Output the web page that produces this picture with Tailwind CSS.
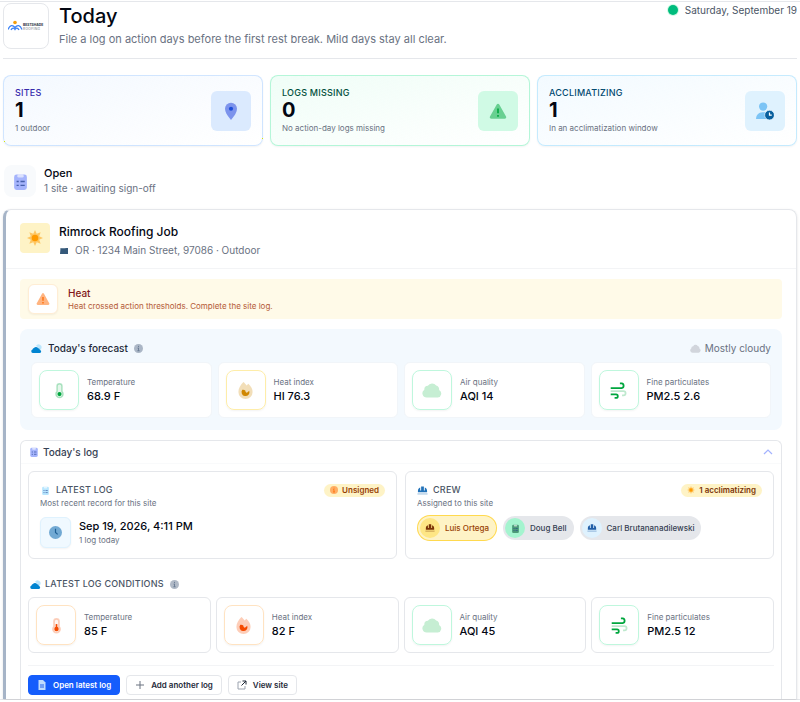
<!DOCTYPE html>
<html lang="en">
<head>
    <meta charset="UTF-8">
    <meta name="viewport" content="width=device-width, initial-scale=1.0">
    <title>Today</title>
    <script src="https://cdn.jsdelivr.net/npm/@tailwindcss/browser@4"></script>
</head>
<body class="bg-white font-['Inter',sans-serif] text-gray-950 overflow-x-hidden">
    <!-- Icon set -->
    <svg class="hidden">
        <symbol id="clipboard" viewBox="0 0 24 24">
            <rect x="3" y="2" width="18" height="22" rx="3.500" fill="currentColor"/>
            <rect x="7.500" y="2" width="9" height="4.500" rx="2" fill="#fff" opacity=".6"/>
            <path d="M6.500 12h3M12 12h6M6.500 17.500h3M12 17.500h6" stroke="#1e3a8a" stroke-opacity=".7" stroke-width="2"/>
        </symbol>
        <symbol id="warn" viewBox="0 0 24 24">
            <path d="M10.300 3.200a2 2 0 0 1 3.400 0l9 16a2 2 0 0 1-1.700 3H3a2 2 0 0 1-1.700-3z" fill="currentColor" opacity=".5"/>
            <path d="M12 8.500v6.500M12 17.300v2.400" stroke="currentColor" stroke-width="2.200"/>
        </symbol>
        <symbol id="sun" viewBox="0 0 24 24">
            <path d="M12 0l2.600 5.700L20.500 3.500l-2.200 5.900L24 12l-5.700 2.600 2.200 5.900-5.900-2.200L12 24l-2.600-5.700-5.900 2.200 2.200-5.900L0 12l5.700-2.600L3.500 3.500l5.900 2.200z" fill="currentColor" opacity=".5"/>
            <circle cx="12" cy="12" r="5" fill="currentColor"/>
        </symbol>
        <symbol id="cloud" viewBox="0 0 24 24">
            <path d="M5.500 21a5 5 0 0 1-2.700-9.200A4.500 4.500 0 0 1 7 7a6 6 0 0 1 10-.5 5 5 0 0 1 3.500 5.500A4.800 4.800 0 0 1 19 21z" fill="currentColor"/>
        </symbol>
        <symbol id="cloud-sun" viewBox="0 0 24 24">
            <path d="M11 6a6.500 6.500 0 0 1 11.500 6c-.3 1.500-1 2.500-1.500 3" fill="#bae6fd"/>
            <path d="M4.500 22a4 4 0 0 1-1.200-7.800A4 4 0 0 1 6.500 11a5.500 5.500 0 0 1 9.500.5 4 4 0 0 1 3.500 3.700 3.500 3.500 0 0 1 0 6.800z" fill="currentColor"/>
        </symbol>
        <symbol id="info" viewBox="0 0 24 24">
            <circle cx="12" cy="12" r="12" fill="currentColor" opacity=".5"/>
            <path d="M12 5v3M12 10v8M9 18h6M9.500 11H12" stroke="currentColor" stroke-width="2.200"/>
        </symbol>
        <symbol id="thermo" viewBox="0 0 24 24">
            <path d="M12 2.500a3.500 3.500 0 0 1 3.500 3.500v7.500a5 5 0 1 1-7 0V6A3.500 3.500 0 0 1 12 2.500z" fill="currentColor" fill-opacity=".1" stroke="currentColor" stroke-opacity=".3" stroke-width="2"/>
            <circle cx="12" cy="17" r="3" fill="currentColor"/>
        </symbol>
        <symbol id="thermo-high" viewBox="0 0 24 24">
            <path d="M12 2.500a3.500 3.500 0 0 1 3.500 3.500v7.500a5 5 0 1 1-7 0V6A3.500 3.500 0 0 1 12 2.500z" fill="currentColor" fill-opacity=".05" stroke="currentColor" stroke-opacity=".25" stroke-width="2.500"/>
            <circle cx="12" cy="17" r="3.200" fill="currentColor"/>
            <path d="M12 10v7" stroke="currentColor" stroke-width="2.400"/>
        </symbol>
        <symbol id="flame" viewBox="0 0 24 24">
            <path d="M9 0c2 1.500 3.300 3 4.500 5L16 2.500c4 3.500 6 7.500 6 11.500a10 10 0 0 1-20 0C2 9 5 4 9 0z" fill="currentColor" opacity=".28"/>
            <path d="M7.500 11a5.600 5.600 0 1 0 9.800 1.500L14 15c-1.500 0-2-1-2.300-3-1.200-1-2.700-1.500-4.200-1z" fill="currentColor"/>
        </symbol>
        <symbol id="wind" viewBox="0 0 24 24" fill="none">
            <path d="M1 8.500h15.500a3.300 3.300 0 0 0 0-6.500H14" stroke="currentColor" stroke-width="2.500"/>
            <path d="M1 13h18a3 3 0 0 1 0 6h-2" stroke="currentColor" stroke-width="2.500" opacity=".25"/>
            <path d="M1 17.500h7.500a2.300 2.300 0 0 1 0 5H6.500" stroke="currentColor" stroke-width="2.500"/>
        </symbol>
        <symbol id="clock" viewBox="0 0 24 24">
            <circle cx="12" cy="12" r="12" fill="currentColor" opacity=".7"/>
            <path d="M12 5v7l4 3.500" fill="none" stroke="#1e5f94" stroke-width="2.200"/>
        </symbol>
        <symbol id="helmet" viewBox="0 0 24 24">
            <path d="M2 16v-3c0-4 2-6.500 5-7.500V12h2V3h6v9h2V5.500c3 1 5 3.500 5 7.500v3z" fill="currentColor"/>
            <path d="M1 19.500h22" stroke="currentColor" stroke-width="2.500" opacity=".4"/>
        </symbol>
    </svg>

    <div class="mt-px border-y border-gray-200 pt-px px-[3px]">
        <!-- Header -->
        <header class="flex items-start gap-2.5 border-b border-gray-200 pb-[9px]">
            <div class="flex size-[46px] shrink-0 items-center justify-center rounded-lg border border-gray-200">
                <svg class="w-9" viewBox="0 0 36 12" role="img" aria-label="Bestshade Roofing">
                    <circle cx="7" cy="2.500" r="1.800" fill="#f59e0b"/>
                    <path d="M0 9.500C2 5 4.500 4.500 7 7.500 9.500 4.500 12 5 14 9.500M3 10C4.500 7 6 8 7 9.500 8 8 9.500 7 11 10" fill="none" stroke="#3b82f6" stroke-width="1.300"/>
                    <text x="15" y="6" font-size="3.300" font-weight="800" fill="#374151">BESTSHADE</text>
                    <text x="15" y="9.500" font-size="3.300" class="tracking-widest" fill="#6b7280">ROOFING</text>
                </svg>
            </div>
            <div class="min-w-0 flex-1">
                <h1 class="text-[20px] leading-[26px] font-medium">Today</h1>
                <p class="mt-0.5 text-[11px] leading-4 text-gray-500">File a log on action days before the first rest break. Mild days stay all clear.</p>
            </div>
            <div class="flex items-center gap-[7px] text-[10px] leading-[14px] text-gray-600">
                <span class="size-2.5 rounded-full bg-emerald-500 ring-1 ring-emerald-100"></span>
                Saturday, September 19
            </div>
        </header>

        <!-- Stats -->
        <section class="mt-4 grid grid-cols-3 gap-[7px]">
            <div class="flex items-center justify-between rounded-lg border border-blue-200/70 bg-linear-to-br from-blue-50/70 to-white px-[11px] py-2.5 shadow-xs">
                <div>
                    <h2 class="text-[9px] leading-[14px] font-medium tracking-wide text-indigo-800">SITES</h2>
                    <p class="text-[20px] leading-[21px] font-bold">1</p>
                    <p class="text-[8px] leading-[14px] text-gray-500">1 outdoor</p>
                </div>
                <div class="flex size-10 items-center justify-center rounded-md bg-blue-100">
                    <svg class="size-[18px]" viewBox="0 0 24 24"><path d="M12 24C7 18 4 13.500 4 9a8 8 0 0 1 16 0c0 4.500-3 9-8 15z" fill="#7c93ec"/><circle cx="12" cy="9" r="2.800" fill="#1d4ed8"/></svg>
                </div>
            </div>
            <div class="flex items-center justify-between rounded-lg border border-emerald-200/80 bg-linear-to-br from-emerald-50/80 to-white px-[11px] py-2.5 shadow-xs">
                <div>
                    <h2 class="text-[9px] leading-[14px] font-medium tracking-wide text-emerald-900">LOGS MISSING</h2>
                    <p class="text-[20px] leading-[21px] font-bold">0</p>
                    <p class="text-[8px] leading-[14px] text-gray-500">No action-day logs missing</p>
                </div>
                <div class="flex size-10 items-center justify-center rounded-md bg-emerald-100">
                    <svg class="size-[18px] text-green-600"><use href="#warn"/></svg>
                </div>
            </div>
            <div class="flex items-center justify-between rounded-lg border border-sky-200/80 bg-linear-to-br from-sky-50/80 to-white px-[11px] py-2.5 shadow-xs">
                <div>
                    <h2 class="text-[9px] leading-[14px] font-medium tracking-wide text-sky-900">ACCLIMATIZING</h2>
                    <p class="text-[20px] leading-[21px] font-bold">1</p>
                    <p class="text-[8px] leading-[14px] text-gray-500">In an acclimatization window</p>
                </div>
                <div class="flex size-10 items-center justify-center rounded-md bg-sky-100">
                    <svg class="size-[18px]" viewBox="0 0 24 24"><circle cx="9.500" cy="6" r="5.500" fill="#7cc4f5"/><path d="M0 22.500c0-5 3.500-9 8.500-9h3c2 0 3 .5 4 1.500v7.500z" fill="#7cc4f5"/><circle cx="18" cy="17.500" r="6.500" fill="#075f9e" stroke="#e0f2fe"/><path d="M18 14v3.500h3" fill="none" stroke="#fff" stroke-width="1.600"/></svg>
                </div>
            </div>
        </section>

        <!-- Open sites -->
        <div class="mt-[19px] flex items-center gap-2 pl-px">
            <div class="flex size-8 items-center justify-center rounded-lg bg-slate-50">
                <svg class="size-[17px] text-[#a5b4fc]"><use href="#clipboard"/></svg>
            </div>
            <div>
                <h2 class="text-[11px] leading-[15px] font-medium">Open</h2>
                <p class="text-[10px] leading-[15px] text-gray-500">1 site · awaiting sign-off</p>
            </div>
        </div>

        <article class="mt-3 rounded-t-lg border border-b-0 border-l-3 border-gray-200 border-l-slate-400/80 shadow-sm">
            <div class="flex items-start gap-[9px] border-b border-gray-100 px-3.5 pt-[13px] pb-2.5">
                <div class="flex size-[30px] items-center justify-center rounded-sm bg-amber-100">
                    <svg class="size-4 text-amber-500"><use href="#sun"/></svg>
                </div>
                <div>
                    <h3 class="text-[12px] leading-[18px] font-medium">Rimrock Roofing Job</h3>
                    <p class="mt-0.5 flex items-center gap-1.5 text-[10px] leading-[15px] text-gray-500">
                        <svg class="h-2 w-2.5" viewBox="0 0 10 8"><path d="M1.500 1C4 2 6 .5 9 1v6H1z" fill="#35597a"/></svg>
                        OR · 1234 Main Street, 97086 · Outdoor
                    </p>
                </div>
            </div>

            <div class="space-y-2.5 px-3.5 pt-2.5">
                <div class="flex items-center gap-2.5 rounded-sm bg-[#fffae8] px-2 py-[5px]">
                    <div class="flex size-[30px] items-center justify-center rounded-md border border-orange-100 bg-white shadow-xs">
                        <svg class="size-3.5 text-orange-500"><use href="#warn"/></svg>
                    </div>
                    <div>
                        <h4 class="text-[10px] leading-[13px] font-medium text-red-900">Heat</h4>
                        <p class="text-[8px] leading-[12px] text-orange-800/80">Heat crossed action thresholds. Complete the site log.</p>
                    </div>
                </div>

                <!-- Forecast -->
                <section class="rounded-lg bg-[#f3f9fe] px-[11px] pt-[11px] pb-3">
                    <div class="flex items-center justify-between text-[10px] leading-4">
                        <h4 class="flex items-center gap-1.5 font-medium text-gray-800">
                            <svg class="size-[11px] text-sky-600"><use href="#cloud-sun"/></svg>
                            Today's forecast
                            <svg class="size-[9px] text-slate-500"><use href="#info"/></svg>
                        </h4>
                        <p class="flex items-center gap-1 text-gray-500">
                            <svg class="size-[11px] text-gray-300"><use href="#cloud"/></svg>
                            Mostly cloudy
                        </p>
                    </div>
                    <dl class="mt-1.5 grid grid-cols-4 gap-1.5">
                        <div class="flex items-center gap-2 rounded-md border border-slate-100 bg-white px-[7px] py-[7px]">
                            <div class="flex size-10 items-center justify-center rounded-lg border border-emerald-200/70 shadow-xs">
                                <svg class="size-[17px] text-green-600"><use href="#thermo"/></svg>
                            </div>
                            <div>
                                <dt class="text-[8px] leading-[13px] text-gray-500">Temperature</dt>
                                <dd class="text-[11px] leading-[15px] font-medium">68.9 F</dd>
                            </div>
                        </div>
                        <div class="flex items-center gap-2 rounded-md border border-slate-100 bg-white px-[7px] py-[7px]">
                            <div class="flex size-10 items-center justify-center rounded-lg border border-amber-200/70 shadow-xs">
                                <svg class="size-[17px] text-yellow-600"><use href="#flame"/></svg>
                            </div>
                            <div>
                                <dt class="text-[8px] leading-[13px] text-gray-500">Heat index</dt>
                                <dd class="text-[11px] leading-[15px] font-medium">HI 76.3</dd>
                            </div>
                        </div>
                        <div class="flex items-center gap-2 rounded-md border border-slate-100 bg-white px-[7px] py-[7px]">
                            <div class="flex size-10 items-center justify-center rounded-lg border border-emerald-200/70 shadow-xs">
                                <svg class="size-5 text-[#c6eed3]"><use href="#cloud"/></svg>
                            </div>
                            <div>
                                <dt class="text-[8px] leading-[13px] text-gray-500">Air quality</dt>
                                <dd class="text-[11px] leading-[15px] font-medium">AQI 14</dd>
                            </div>
                        </div>
                        <div class="flex items-center gap-2 rounded-md border border-slate-100 bg-white px-[7px] py-[7px]">
                            <div class="flex size-10 items-center justify-center rounded-lg border border-emerald-200/70 shadow-xs">
                                <svg class="size-[17px] text-green-600"><use href="#wind"/></svg>
                            </div>
                            <div>
                                <dt class="text-[8px] leading-[13px] text-gray-500">Fine particulates</dt>
                                <dd class="text-[11px] leading-[15px] font-medium">PM2.5 2.6</dd>
                            </div>
                        </div>
                    </dl>
                </section>

                <!-- Log -->
                <section class="rounded-t-md border border-b-0 border-gray-200">
                    <button type="button" aria-expanded="true" class="flex w-full items-center justify-between border-b border-gray-50 px-2 py-[3px] text-[10px] leading-4 font-medium text-gray-700">
                        <span class="flex items-center gap-1">
                            <svg class="size-2.5 text-[#a5b4fc]"><use href="#clipboard"/></svg>
                            Today's log
                        </span>
                        <svg class="size-2.5 text-indigo-300" viewBox="0 0 10 10" fill="none"><path d="M1 7l4-4 4 4" stroke="currentColor" stroke-width="1.200"/></svg>
                    </button>

                    <div class="px-[7px] pt-[7px]">
                        <div class="grid grid-cols-2 gap-2">
                            <div class="rounded-md border border-gray-200 px-[11px] pt-[11px] pb-2.5">
                                <div class="flex items-center justify-between">
                                    <h5 class="flex items-center gap-1.5 pl-px text-[9px] leading-[14px] font-medium tracking-wide text-gray-600">
                                        <svg class="size-[9px] text-sky-200"><use href="#clipboard"/></svg>
                                        LATEST LOG
                                    </h5>
                                    <span class="flex items-center gap-1 rounded-full bg-amber-100 px-1.5 text-[8px] leading-[13px] font-semibold text-amber-800">
                                        <svg class="size-2 text-orange-500"><use href="#info"/></svg>
                                        Unsigned
                                    </span>
                                </div>
                                <p class="text-[8px] leading-[13px] text-gray-500">Most recent record for this site</p>
                                <div class="mt-[7px] flex items-center gap-2">
                                    <div class="flex size-[31px] items-center justify-center rounded-md border border-sky-100 bg-sky-50 shadow-xs">
                                        <svg class="size-[13px] text-[#3b87c0]"><use href="#clock"/></svg>
                                    </div>
                                    <div>
                                        <p class="text-[11px] leading-[15px] font-medium">Sep 19, 2026, 4:11 PM</p>
                                        <p class="text-[8px] leading-[13px] text-gray-500">1 log today</p>
                                    </div>
                                </div>
                            </div>
                            <div class="rounded-md border border-gray-200 px-[11px] pt-[11px] pb-2.5">
                                <div class="flex items-center justify-between">
                                    <h5 class="flex items-center gap-[5px] text-[9px] leading-[14px] font-medium tracking-wide text-gray-600">
                                        <svg class="size-[11px] text-[#2272b9]"><use href="#helmet"/></svg>
                                        CREW
                                    </h5>
                                    <span class="flex items-center gap-1 rounded-full bg-amber-100 px-1.5 text-[8px] leading-[13px] font-semibold text-amber-900">
                                        <svg class="size-2 text-amber-500"><use href="#sun"/></svg>
                                        1 acclimatizing
                                    </span>
                                </div>
                                <p class="text-[8px] leading-[13px] text-gray-500">Assigned to this site</p>
                                <ul class="mt-[5px] flex items-center gap-1.5 text-[8px] leading-[14px] font-medium">
                                    <li class="flex items-center gap-[5px] rounded-full border border-amber-300/80 bg-amber-100 py-0.5 pr-[7px] pl-0.5 text-amber-800">
                                        <span class="flex size-5 items-center justify-center rounded-full bg-amber-200"><svg class="size-2.5 text-amber-900"><use href="#helmet"/></svg></span>
                                        Luis Ortega
                                    </li>
                                    <li class="flex items-center gap-[5px] rounded-full bg-gray-200 py-0.5 pr-[7px] pl-0.5 text-gray-700">
                                        <span class="flex size-5 items-center justify-center rounded-full bg-emerald-200"><svg class="size-[9px] text-[#4c9a78]"><use href="#clipboard"/></svg></span>
                                        Doug Bell
                                    </li>
                                    <li class="flex items-center gap-[5px] rounded-full bg-gray-200 py-0.5 pr-[7px] pl-0.5 text-gray-700">
                                        <span class="flex size-5 items-center justify-center rounded-full bg-sky-100"><svg class="size-2.5 text-[#205fa8]"><use href="#helmet"/></svg></span>
                                        Carl Brutananadilewski
                                    </li>
                                </ul>
                            </div>
                        </div>

                        <h5 class="mt-[17px] flex items-center gap-1 pl-0.5 text-[9px] leading-4 font-medium tracking-wide text-gray-600">
                            <svg class="size-[11px] text-sky-600"><use href="#cloud-sun"/></svg>
                            LATEST LOG CONDITIONS
                            <svg class="ml-0.5 size-[9px] text-slate-500"><use href="#info"/></svg>
                        </h5>
                        <dl class="mt-[5px] grid grid-cols-4 gap-[5px]">
                            <div class="flex items-center gap-2 rounded-md border border-gray-200 px-[7px] py-[7px]">
                                <div class="flex size-10 items-center justify-center rounded-lg border border-orange-200/70 shadow-xs">
                                    <svg class="size-[17px] text-orange-600"><use href="#thermo-high"/></svg>
                                </div>
                                <div>
                                    <dt class="text-[8px] leading-[13px] text-gray-500">Temperature</dt>
                                    <dd class="text-[11px] leading-[15px] font-medium">85 F</dd>
                                </div>
                            </div>
                            <div class="flex items-center gap-2 rounded-md border border-gray-200 px-[7px] py-[7px]">
                                <div class="flex size-10 items-center justify-center rounded-lg border border-orange-200/70 shadow-xs">
                                    <svg class="size-[17px] text-orange-600"><use href="#flame"/></svg>
                                </div>
                                <div>
                                    <dt class="text-[8px] leading-[13px] text-gray-500">Heat index</dt>
                                    <dd class="text-[11px] leading-[15px] font-medium">82 F</dd>
                                </div>
                            </div>
                            <div class="flex items-center gap-2 rounded-md border border-gray-200 px-[7px] py-[7px]">
                                <div class="flex size-10 items-center justify-center rounded-lg border border-emerald-200/70 shadow-xs">
                                    <svg class="size-5 text-[#c6eed3]"><use href="#cloud"/></svg>
                                </div>
                                <div>
                                    <dt class="text-[8px] leading-[13px] text-gray-500">Air quality</dt>
                                    <dd class="text-[11px] leading-[15px] font-medium">AQI 45</dd>
                                </div>
                            </div>
                            <div class="flex items-center gap-2 rounded-md border border-gray-200 px-[7px] py-[7px]">
                                <div class="flex size-10 items-center justify-center rounded-lg border border-emerald-200/70 shadow-xs">
                                    <svg class="size-[17px] text-green-600"><use href="#wind"/></svg>
                                </div>
                                <div>
                                    <dt class="text-[8px] leading-[13px] text-gray-500">Fine particulates</dt>
                                    <dd class="text-[11px] leading-[15px] font-medium">PM2.5 12</dd>
                                </div>
                            </div>
                        </dl>

                        <div class="mt-3 flex gap-1.5 border-t border-gray-100 pt-[9px] pb-1 text-[8px] leading-[14px] font-semibold">
                            <button type="button" class="flex items-center gap-1.5 rounded-sm border border-blue-600 bg-blue-600 px-2 py-0.5 text-white">
                                <svg class="size-2.5" viewBox="0 0 10 10"><path d="M1.500 0H6l2.500 2.500V10h-7z" fill="#bfdbfe"/><path d="M3 5h4M3 7h4" stroke="#2563eb"/></svg>
                                Open latest log
                            </button>
                            <button type="button" class="flex items-center gap-1.5 rounded-sm border border-gray-200 px-2 py-0.5 text-gray-800">
                                <svg class="size-2.5" viewBox="0 0 10 10"><path d="M5 1v8M1 5h8" stroke="#6b7280"/></svg>
                                Add another log
                            </button>
                            <button type="button" class="flex items-center gap-1.5 rounded-sm border border-gray-200 px-2 py-0.5 text-gray-800">
                                <svg class="size-2.5" viewBox="0 0 10 10" fill="none"><path d="M4 2H1v7h7V6" stroke="#9ca3af"/><path d="M5.500 1H9v3.500M9 1L4.500 5.500" stroke="#1f2937"/></svg>
                                View site
                            </button>
                        </div>
                    </div>
                </section>
            </div>
        </article>
    </div>
</body>
</html>
